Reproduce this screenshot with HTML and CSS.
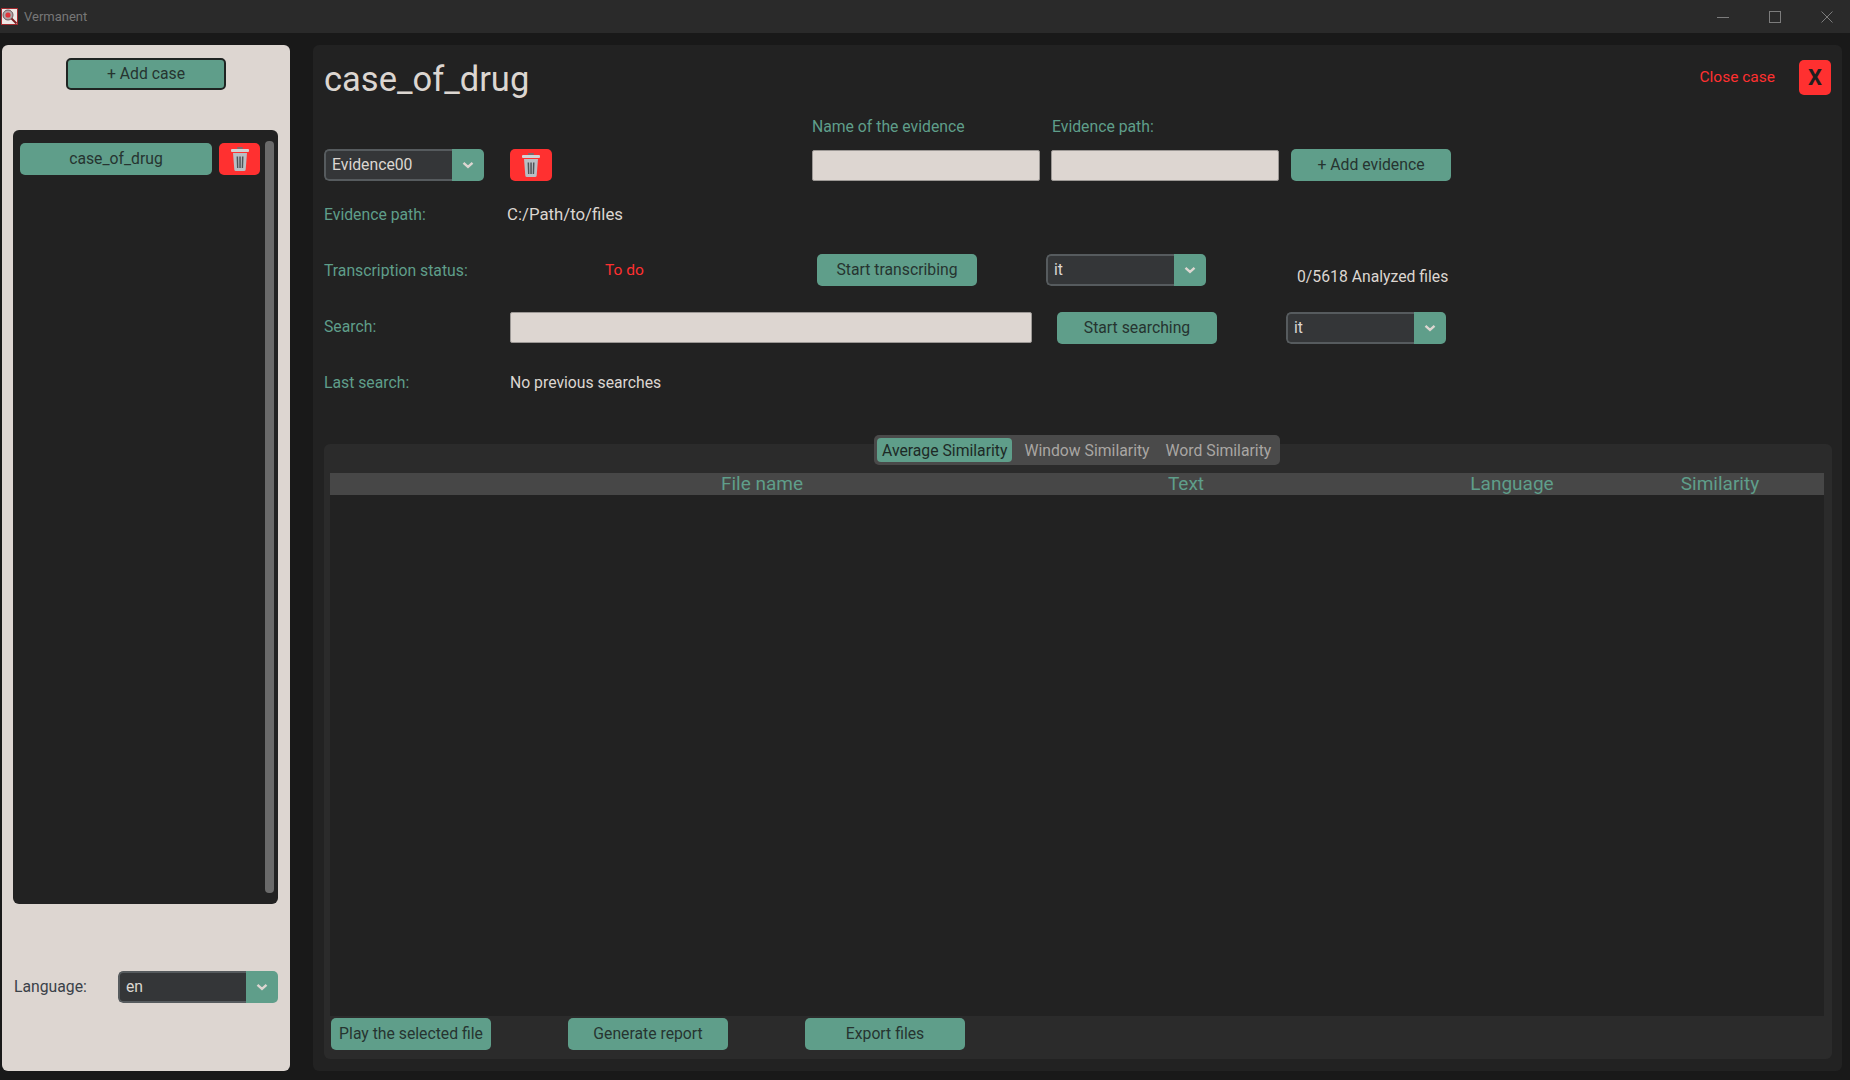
FILE: index.html
```html
<!DOCTYPE html>
<html lang="en">
<head>
<meta charset="utf-8">
<title>Vermanent</title>
<link rel="stylesheet" href="styles.css">
</head>
<body>
<svg class="sprite" width="0" height="0" aria-hidden="true">
  <symbol id="trash" viewBox="0 0 18 24">
    <rect x="6" y="0" width="6" height="2" rx="1" fill="#7d6a6c"/>
    <rect x="0" y="2" width="18" height="3" rx="1" fill="#d0d3d6"/>
    <path d="M2 6H16L14.7 22.5Q14.6 24 13 24H5Q3.4 24 3.3 22.5Z" fill="#b9bec4"/>
    <path d="M5.6 9.5H7.1L7.4 21H6ZM8.3 9.5H9.8V21H8.3ZM11 9.5H12.5L12.1 21H10.7Z" fill="#4f5358"/>
  </symbol>
  <symbol id="chev" viewBox="0 0 12 8">
    <path d="M1.5 1.8L6 5.8L10.5 1.8" fill="none" stroke="#dcd6d1" stroke-width="2.4"/>
  </symbol>
</svg>

<header class="titlebar">
  <svg class="logo" viewBox="0 0 17 17" aria-hidden="true">
    <rect x="0.5" y="0.5" width="16" height="16" fill="#eee8e6" stroke="#a32a2e"/>
    <circle cx="7" cy="7" r="5" fill="#b0a6a8" stroke="#6b5a5c"/>
    <circle cx="7" cy="7" r="2.6" fill="#e0353a"/>
    <path d="M10.5 10.5L15.5 15.5" stroke="#7c1d20" stroke-width="2"/>
  </svg>
  <span class="app-name">Vermanent</span>
  <div class="winctl">
    <svg class="wbtn" viewBox="0 0 12 12" aria-hidden="true"><path d="M0 6.5H12" stroke="#7c7c7c"/></svg>
    <svg class="wbtn" viewBox="0 0 12 12" aria-hidden="true"><rect x="0.5" y="0.5" width="11" height="11" fill="none" stroke="#7c7c7c"/></svg>
    <svg class="wbtn" viewBox="0 0 12 12" aria-hidden="true"><path d="M0.5 0.5L11.5 11.5M11.5 0.5L0.5 11.5" stroke="#7c7c7c"/></svg>
  </div>
</header>

<div class="workspace">
  <aside class="sidebar">
    <button class="btn add-case">+ Add case</button>
    <div class="case-list">
      <div class="case-row">
        <button class="btn case-btn">case_of_drug</button>
        <button class="btn-red trash-case"><svg class="trash"><use href="#trash"/></svg></button>
      </div>
      <div class="scrollbar"></div>
    </div>
    <div class="lang-row">
      <span class="lang-label">Language:</span>
      <div class="combo"><span class="combo-val">en</span><span class="combo-arrow"><svg class="chev"><use href="#chev"/></svg></span></div>
    </div>
  </aside>

  <main class="main">
    <div class="head">
      <h1 class="title">case_of_drug</h1>
      <span class="close-label">Close case</span>
      <button class="btn-red close-btn">X</button>
    </div>

    <div class="row labels-row">
      <span class="lbl lbl-name">Name of the evidence</span>
      <span class="lbl">Evidence path:</span>
    </div>

    <div class="row add-row">
      <div class="combo"><span class="combo-val">Evidence00</span><span class="combo-arrow"><svg class="chev"><use href="#chev"/></svg></span></div>
      <button class="btn-red trash-ev"><svg class="trash"><use href="#trash"/></svg></button>
      <input class="field field-a" type="text">
      <input class="field field-b" type="text">
      <button class="btn add-ev">+ Add evidence</button>
    </div>

    <div class="row path-row">
      <span class="lbl lbl-col">Evidence path:</span>
      <span class="val-large">C:/Path/to/files</span>
    </div>

    <div class="row trans-row">
      <span class="lbl lbl-status">Transcription status:</span>
      <span class="todo">To do</span>
      <button class="btn start-t">Start transcribing</button>
      <div class="combo combo-t"><span class="combo-val">it</span><span class="combo-arrow"><svg class="chev"><use href="#chev"/></svg></span></div>
      <span class="analyzed">0/5618 Analyzed files</span>
    </div>

    <div class="row search-row">
      <span class="lbl lbl-search lbl-up">Search:</span>
      <input class="field field-search" type="text">
      <button class="btn start-s">Start searching</button>
      <div class="combo combo-s"><span class="combo-val">it</span><span class="combo-arrow"><svg class="chev"><use href="#chev"/></svg></span></div>
    </div>

    <div class="row last-row">
      <span class="lbl lbl-search">Last search:</span>
      <span class="val">No previous searches</span>
    </div>

    <section class="tabview">
      <div class="seg">
        <span class="seg-item seg-on">Average Similarity</span>
        <span class="seg-item">Window Similarity</span>
        <span class="seg-item">Word Similarity</span>
      </div>
      <div class="table">
        <div class="thead">
          <span>File name</span>
          <span>Text</span>
          <span>Language</span>
          <span>Similarity</span>
        </div>
      </div>
      <div class="footer">
        <button class="btn">Play the selected file</button>
        <button class="btn">Generate report</button>
        <button class="btn">Export files</button>
      </div>
    </section>
  </main>
</div>
</body>
</html>
```
FILE: styles.css
```css
* { box-sizing: border-box; }
html, body { margin: 0; height: 100%; }
body {
  width: 1850px;
  height: 1080px;
  overflow: hidden;
  display: flex;
  flex-direction: column;
  background: #191919;
  font-family: Roboto, "Liberation Sans", sans-serif;
  font-size: 15.75px;
  color: #dcd6d1;
}
.sprite { position: absolute; }
button { font-family: inherit; }

.titlebar {
  height: 33px;
  flex: none;
  display: flex;
  align-items: center;
  background: #2a2a2a;
  padding: 0 17px 0 1px;
}
.logo { width: 17px; height: 17px; }
.app-name { margin-left: 6px; font-size: 13px; color: #777; }
.winctl { margin-left: auto; display: flex; gap: 40px; }
.wbtn { width: 12px; height: 12px; display: block; }

.workspace {
  flex: 1;
  display: flex;
  gap: 23px;
  padding: 12px 8px 9px 2px;
  min-height: 0;
}

.btn {
  width: 160px;
  height: 32px;
  padding: 0 0 2px;
  border: 0;
  border-radius: 5px;
  background: #5f9e8a;
  color: #263430;
  font-size: 15.75px;
}
.btn-red {
  display: flex;
  align-items: center;
  justify-content: center;
  padding: 0;
  border: 0;
  border-radius: 5px;
  background: #ff3030;
}
.trash { width: 18px; height: 24px; display: block; }

.sidebar {
  width: 288px;
  flex: none;
  display: flex;
  flex-direction: column;
  background: #ddd6d1;
  border-radius: 6px;
  padding: 13px 12px 0 11px;
}
.add-case { align-self: center; border: 2px solid #1f2422; margin-left: 1px; }
.case-list {
  margin-top: 40px;
  height: 774px;
  flex: none;
  display: flex;
  background: #222;
  border-radius: 6px;
  padding: 11px 4px 11px 7px;
}
.case-row { display: flex; gap: 7px; margin-top: 2px; height: 32px; }
.case-btn { width: 192px; }
.trash-case { width: 41px; height: 32px; }
.scrollbar { width: 9px; margin-left: 5px; background: #6a6a6a; border-radius: 4px; }

.lang-row { margin-top: 67px; display: flex; align-items: center; }
.lang-label { width: 105px; margin: -2px 0 0 1px; color: #3a4148; font-size: 15.75px; }

.combo {
  width: 160px;
  height: 32px;
  flex: none;
  display: flex;
  border-radius: 5px;
  overflow: hidden;
}
.combo-val {
  flex: 1;
  padding-left: 6px;
  background: #343638;
  border: 2px solid #565b5e;
  border-right: 0;
  border-radius: 5px 0 0 5px;
  line-height: 27px;
  color: #dcd6d1;
  font-size: 15.75px;
}
.combo-arrow {
  width: 32px;
  display: flex;
  align-items: center;
  justify-content: center;
  background: #5f9e8a;
}
.chev { width: 12px; height: 8px; }

.main {
  flex: 1;
  display: flex;
  flex-direction: column;
  background: #222;
  border-radius: 6px;
  padding: 0 10px 12px 11px;
  min-width: 0;
}
.head { height: 71px; flex: none; display: flex; align-items: flex-start; padding-top: 15px; }
.title { margin: 0; font-size: 34.5px; line-height: 38px; font-weight: 400; color: #dcd6d1; }
.close-label { margin-left: auto; line-height: 35px; color: #ff3030; font-size: 15.5px; }
.close-btn {
  width: 32px;
  height: 35px;
  margin: 0 1px 0 24px;
  color: #1f1f1f;
  font-size: 22px;
  font-weight: 700;
}

.row { display: flex; align-items: center; flex: none; }
.lbl { color: #5f9e8a; font-size: 15.75px; }
.val { color: #dcd6d1; font-size: 15.75px; }
.val-large { color: #dcd6d1; font-size: 16.8px; }

.labels-row { height: 33px; align-items: flex-start; padding: 1px 0 0 488px; }
.lbl-name { width: 240px; }

.add-row { height: 32px; }
.trash-ev { width: 42px; height: 32px; margin-left: 26px; }
.field {
  height: 31px;
  padding: 0;
  background: #ddd6d1;
  border: 1px solid #9c9895;
  border-radius: 2px;
  outline: 0;
}
.field-a { width: 228px; margin: 1px 0 0 260px; }
.field-b { width: 228px; margin: 1px 0 0 11px; }
.add-ev { margin-left: 12px; }

.path-row { height: 20px; margin-top: 23px; }
.lbl-col { width: 183px; padding-top: 1px; }

.trans-row { height: 32px; margin-top: 30px; }
.lbl-status { width: 281px; }
.todo { width: 212px; color: #ff3030; font-size: 15.5px; }
.combo-t { margin-left: 69px; }
.analyzed { margin: 12px 0 0 91px; font-size: 15.75px; color: #dcd6d1; }

.search-row { height: 32px; margin-top: 26px; }
.lbl-search { width: 186px; }
.lbl-up { padding-bottom: 4px; }
.field-search { width: 522px; align-self: flex-start; }
.start-s { margin-left: 25px; }
.combo-s { margin-left: 69px; }

.last-row { height: 20px; margin-top: 28px; }

.tabview {
  flex: 1;
  margin-top: 52px;
  display: flex;
  flex-direction: column;
  background: #2b2b2b;
  border-radius: 6px;
  padding: 0 8px 9px 6px;
  min-height: 0;
}
.seg {
  align-self: center;
  margin: -9px 0 8px;
  width: 406px;
  height: 30px;
  display: flex;
  align-items: center;
  padding: 3px;
  background: #4a4a4a;
  border-radius: 5px;
  font-size: 15.75px;
}
.seg-item { padding: 1px 11px 0 5px; color: #a9a6a3; white-space: nowrap; line-height: 23px; }
.seg-on { background: #5f9e8a; color: #1d2a26; border-radius: 4px; padding: 1px 5px 0; margin-right: 7px; }
.table { flex: 1; display: flex; flex-direction: column; background: #222; }
.thead {
  height: 22px;
  flex: none;
  display: grid;
  grid-template-columns: 476px 372px 280px 136px;
  padding-left: 194px;
  background: #474747;
  color: #5f9e8a;
  font-size: 19px;
  line-height: 22px;
  text-align: center;
}
.footer { flex: none; display: flex; gap: 77px; padding: 2px 0 0 1px; }
```
